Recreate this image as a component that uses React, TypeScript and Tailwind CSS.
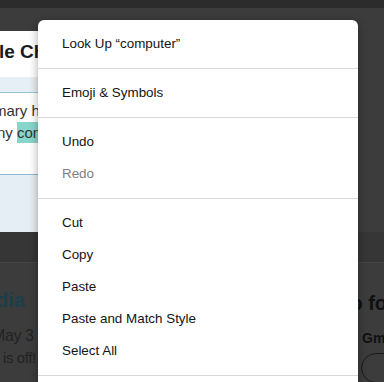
import React from "react";

const Sep = () => <div className="my-2 h-px bg-[#d9d9d9]" />;

const Item = ({ children, disabled }: { children: React.ReactNode; disabled?: boolean }) => (
  <div className={`h-8 flex items-center pl-6 ${disabled ? "text-[#808080]" : "text-[#141414]"}`}>{children}</div>
);

export default function App() {
  return (
    <div
      className="relative w-[384px] h-[382px] overflow-hidden bg-[#3c3c3c] flex flex-col"
      style={{ fontFamily: '"Liberation Sans", Arial, sans-serif' }}
    >
      <div className="h-[8px] bg-[#2c2c2c] shrink-0" />
      <div className="h-[23px] shrink-0" />
      {/* dialog */}
      <div className="w-[345px] h-[201px] bg-white flex flex-col shrink-0 overflow-hidden">
        <div className="h-[46px] pt-[9px] -ml-[1px] text-[19px] font-bold text-[#1a1a1a] leading-[24px] whitespace-nowrap">le Ch</div>
        <div className="h-[16px] bg-[#e6eff5] border-b border-[#9cc3d8]" />
        <div className="pt-[7px] text-[15px] leading-[22px] text-[#333] whitespace-nowrap">
          <div className="-ml-[6px]">mary h</div>
          <div className="-ml-[3px]">
            ny <span className="bg-[#86d7cb] py-[2px]">con</span>
          </div>
        </div>
        <div className="mt-auto h-[58px] bg-[#e5eef4] border-t border-[#8fb9d2]" />
      </div>
      <div className="h-[31px] bg-[#363636] border-b border-[#454545] shrink-0" />
      <div className="flex flex-1 whitespace-nowrap">
        <div className="w-[200px] shrink-0 pt-[25px]">
          <div className="-ml-[4px] text-[20px] font-bold text-[#1b3e4a] leading-[24px]">dia</div>
          <div className="mt-[13px] -ml-[8px] text-[16px] tracking-[-0.4px] leading-[22px] text-[#222]">May 3</div>
          <div className="pl-[3px] text-[15px] tracking-[-0.4px] leading-[22px] text-[#222]">is off!</div>
        </div>
        <div className="w-[184px] min-w-0 shrink-0 pt-[28px]">
          <div className="ml-[126px] text-[20px] font-bold text-[#111] leading-[24px]">Info for</div>
          <div className="mt-[15px] ml-[162px] text-[14px] font-bold text-[#111] leading-[16px]">Gmail</div>
          <div className="mt-[7px] ml-[161px] w-[90px] h-[30px] rounded-full border border-[#1a1a1a]" />
        </div>
      </div>

      {/* context menu */}
      <div className="absolute left-[38px] top-[20px] w-[320px] h-[380px] bg-white rounded-t-[6px] shadow-[0_2px_10px_rgba(0,0,0,0.35)] pt-2 text-[13.4px]">
        <Item>Look Up “computer”</Item>
        <Sep />
        <Item>Emoji &amp; Symbols</Item>
        <Sep />
        <Item>Undo</Item>
        <Item disabled>Redo</Item>
        <Sep />
        <Item>Cut</Item>
        <Item>Copy</Item>
        <Item>Paste</Item>
        <Item>Paste and Match Style</Item>
        <Item>Select All</Item>
        <Sep />
      </div>
    </div>
  );
}
